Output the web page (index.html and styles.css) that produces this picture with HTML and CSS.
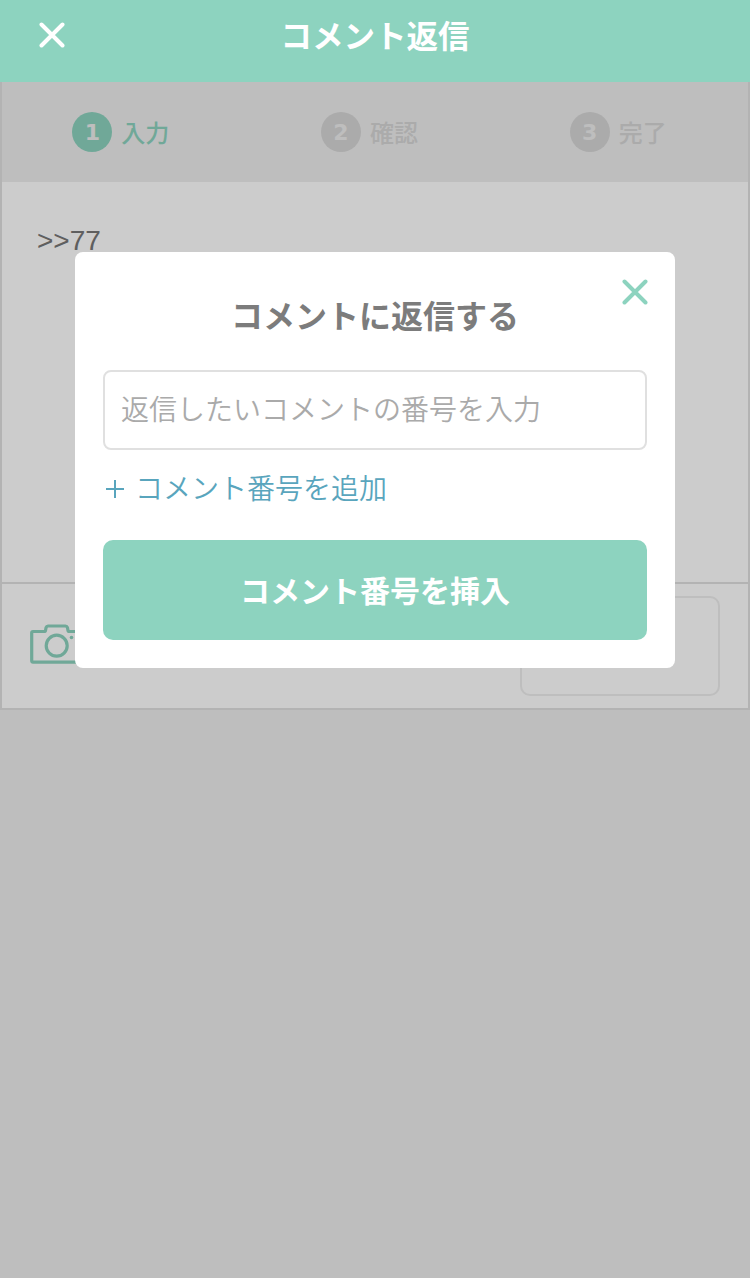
FILE: index.html
```html
<!DOCTYPE html>
<html lang="ja">
<head>
  <meta charset="utf-8">
  <title>コメント返信</title>
  <meta name="viewport" content="width=device-width,initial-scale=1">
  <link rel="stylesheet" href="styles.css">
</head>
<body>
<header class="header">
  <a class="header-close" href="#">
    <svg width="26" height="26" viewBox="0 0 26 26"><path d="M2.5 2.5l21 21M23.5 2.5l-21 21"/></svg>
  </a>
  <h1 class="header-title">コメント返信</h1>
</header>
<div class="form">
  <ol class="steps">
    <li class="step current"><span class="num">1</span>入力</li>
    <li class="step"><span class="num">2</span>確認</li>
    <li class="step"><span class="num">3</span>完了</li>
  </ol>
  <div class="comment">&gt;&gt;77</div>
  <div class="tools">
    <svg class="camera" width="54" height="40" viewBox="0 0 54 40">
      <path d="M3 7.500h11c1 0 1.500-.5 1.600-1.500l.5-2.500c.3-1 .8-1.500 1.900-1.500h17.500c1.100 0 1.600.5 1.900 1.500l.5 2.500c.1 1 .6 1.500 1.600 1.500H51c.8 0 1.300.5 1.300 1.300v28c0 .8-.5 1.300-1.300 1.300H3c-.8 0-1.300-.5-1.300-1.300v-28c0-.8.5-1.300 1.300-1.300z"/>
      <circle cx="26.700" cy="21.700" r="10.500"/>
      <circle class="dot" cx="41.500" cy="13.500" r="1.800"/>
    </svg>
    <div class="submit"></div>
  </div>
</div>
<div class="overlay"></div>
<div class="modal">
  <a class="modal-close" href="#">
    <svg width="26" height="26" viewBox="0 0 26 26"><path d="M2.5 2.5l21 21M23.5 2.5l-21 21"/></svg>
  </a>
  <h2 class="modal-title">コメントに返信する</h2>
  <input class="modal-input" type="text" placeholder="返信したいコメントの番号を入力">
  <a class="modal-add" href="#">
    <svg width="18" height="18" viewBox="0 0 18 18"><path d="M9 0v18M0 9h18"/></svg>
    コメント番号を追加
  </a>
  <button class="modal-btn" type="button">コメント番号を挿入</button>
</div>
</body>
</html>
```
FILE: styles.css
```css
* {
  margin: 0;
  padding: 0;
  box-sizing: border-box;
}

html, body {
  height: 100%;
}

body {
  overflow: hidden;
  background: #eee;
  color: #777;
  font-family: "Liberation Sans", "Noto Sans CJK JP", sans-serif;
}

a {
  text-decoration: none;
}

svg {
  display: block;
  fill: none;
}

/* header */
.header {
  position: relative;
  z-index: 20;
  height: 82px;
  background: #8dd3bf;
}

.header-close {
  position: absolute;
  top: 22px;
  left: 39px;
  stroke: #fff;
  stroke-width: 4;
  stroke-linecap: round;
}

.header-title {
  color: #fff;
  font-family: "Noto Sans CJK JP", sans-serif;
  font-size: 31.5px;
  font-weight: bold;
  line-height: 69px;
  text-align: center;
}

/* form */
.form {
  border: solid #e0e0e0;
  border-width: 0 2px;
  background: #fff;
}

.steps {
  display: flex;
  height: 100px;
  background: #eee;
  list-style: none;
}

.step {
  display: flex;
  flex: 1;
  align-items: center;
  justify-content: center;
  padding-right: 11px;
  color: #d6d6d6;
  font-family: "Noto Sans CJK JP", sans-serif;
  font-size: 24px;
  font-weight: 500;
  line-height: 36px;
}

.num {
  width: 40px;
  height: 40px;
  margin-right: 9px;
  border-radius: 50%;
  background: #d6d6d6;
  color: #eee;
  font: bold 22px/41px "DejaVu Sans", sans-serif;
  text-align: center;
}

.current {
  color: #8dd3bf;
}

.current .num {
  background: #8dd3bf;
}

.comment {
  height: 402px;
  padding: 43px 35px;
  border-bottom: 2px solid #e0e0e0;
  font-size: 28px;
  line-height: 32px;
}

.tools {
  display: flex;
  align-items: center;
  justify-content: space-between;
  height: 126px;
  padding: 12px 28px;
  border-bottom: 2px solid #e0e0e0;
}

.camera {
  margin-top: -4px;
  stroke: #8dd3bf;
  stroke-width: 3.2;
}

.camera .dot {
  fill: #8dd3bf;
  stroke: none;
}

.submit {
  width: 200px;
  height: 100px;
  border: 2px solid #eee;
  border-radius: 10px;
}

/* modal */
.overlay {
  position: fixed;
  z-index: 10;
  top: 0;
  right: 0;
  bottom: 0;
  left: 0;
  background: rgba(0, 0, 0, 0.2);
}

.modal {
  position: fixed;
  z-index: 30;
  top: 252px;
  left: 75px;
  width: 600px;
  height: 416px;
  padding: 38px 28px 28px;
  border-radius: 8px;
  background: #fff;
}

.modal-close {
  position: absolute;
  top: 27px;
  right: 27px;
  stroke: #8dd3bf;
  stroke-width: 4;
  stroke-linecap: round;
}

.modal-title {
  color: #7c7c7c;
  font-family: "Noto Sans CJK JP", sans-serif;
  font-size: 32px;
  font-weight: bold;
  line-height: 48px;
  text-align: center;
}

.modal-input {
  display: block;
  width: 100%;
  height: 80px;
  margin-top: 32px;
  padding: 0 16px 4px;
  border: 2px solid #e0e0e0;
  border-radius: 8px;
  font-family: "Noto Sans CJK JP", sans-serif;
  font-size: 28px;
  font-weight: 350;
}

.modal-input::placeholder {
  color: #aaa;
}

.modal-add {
  display: flex;
  gap: 11px;
  align-items: center;
  height: 40px;
  margin-top: 17px;
  padding-left: 3px;
  color: #59a5bd;
  font-family: "Noto Sans CJK JP", sans-serif;
  font-size: 28px;
  font-weight: 350;
  line-height: 40px;
  stroke: #59a5bd;
  stroke-width: 2;
}

.modal-add svg {
  margin-top: 3px;
}

.modal-btn {
  display: block;
  width: 100%;
  height: 100px;
  margin-top: 33px;
  padding-bottom: 2px;
  border: 0;
  border-radius: 10px;
  background: #8dd3bf;
  color: #fff;
  font-family: "Noto Sans CJK JP", sans-serif;
  font-size: 30px;
  font-weight: bold;
}
```
